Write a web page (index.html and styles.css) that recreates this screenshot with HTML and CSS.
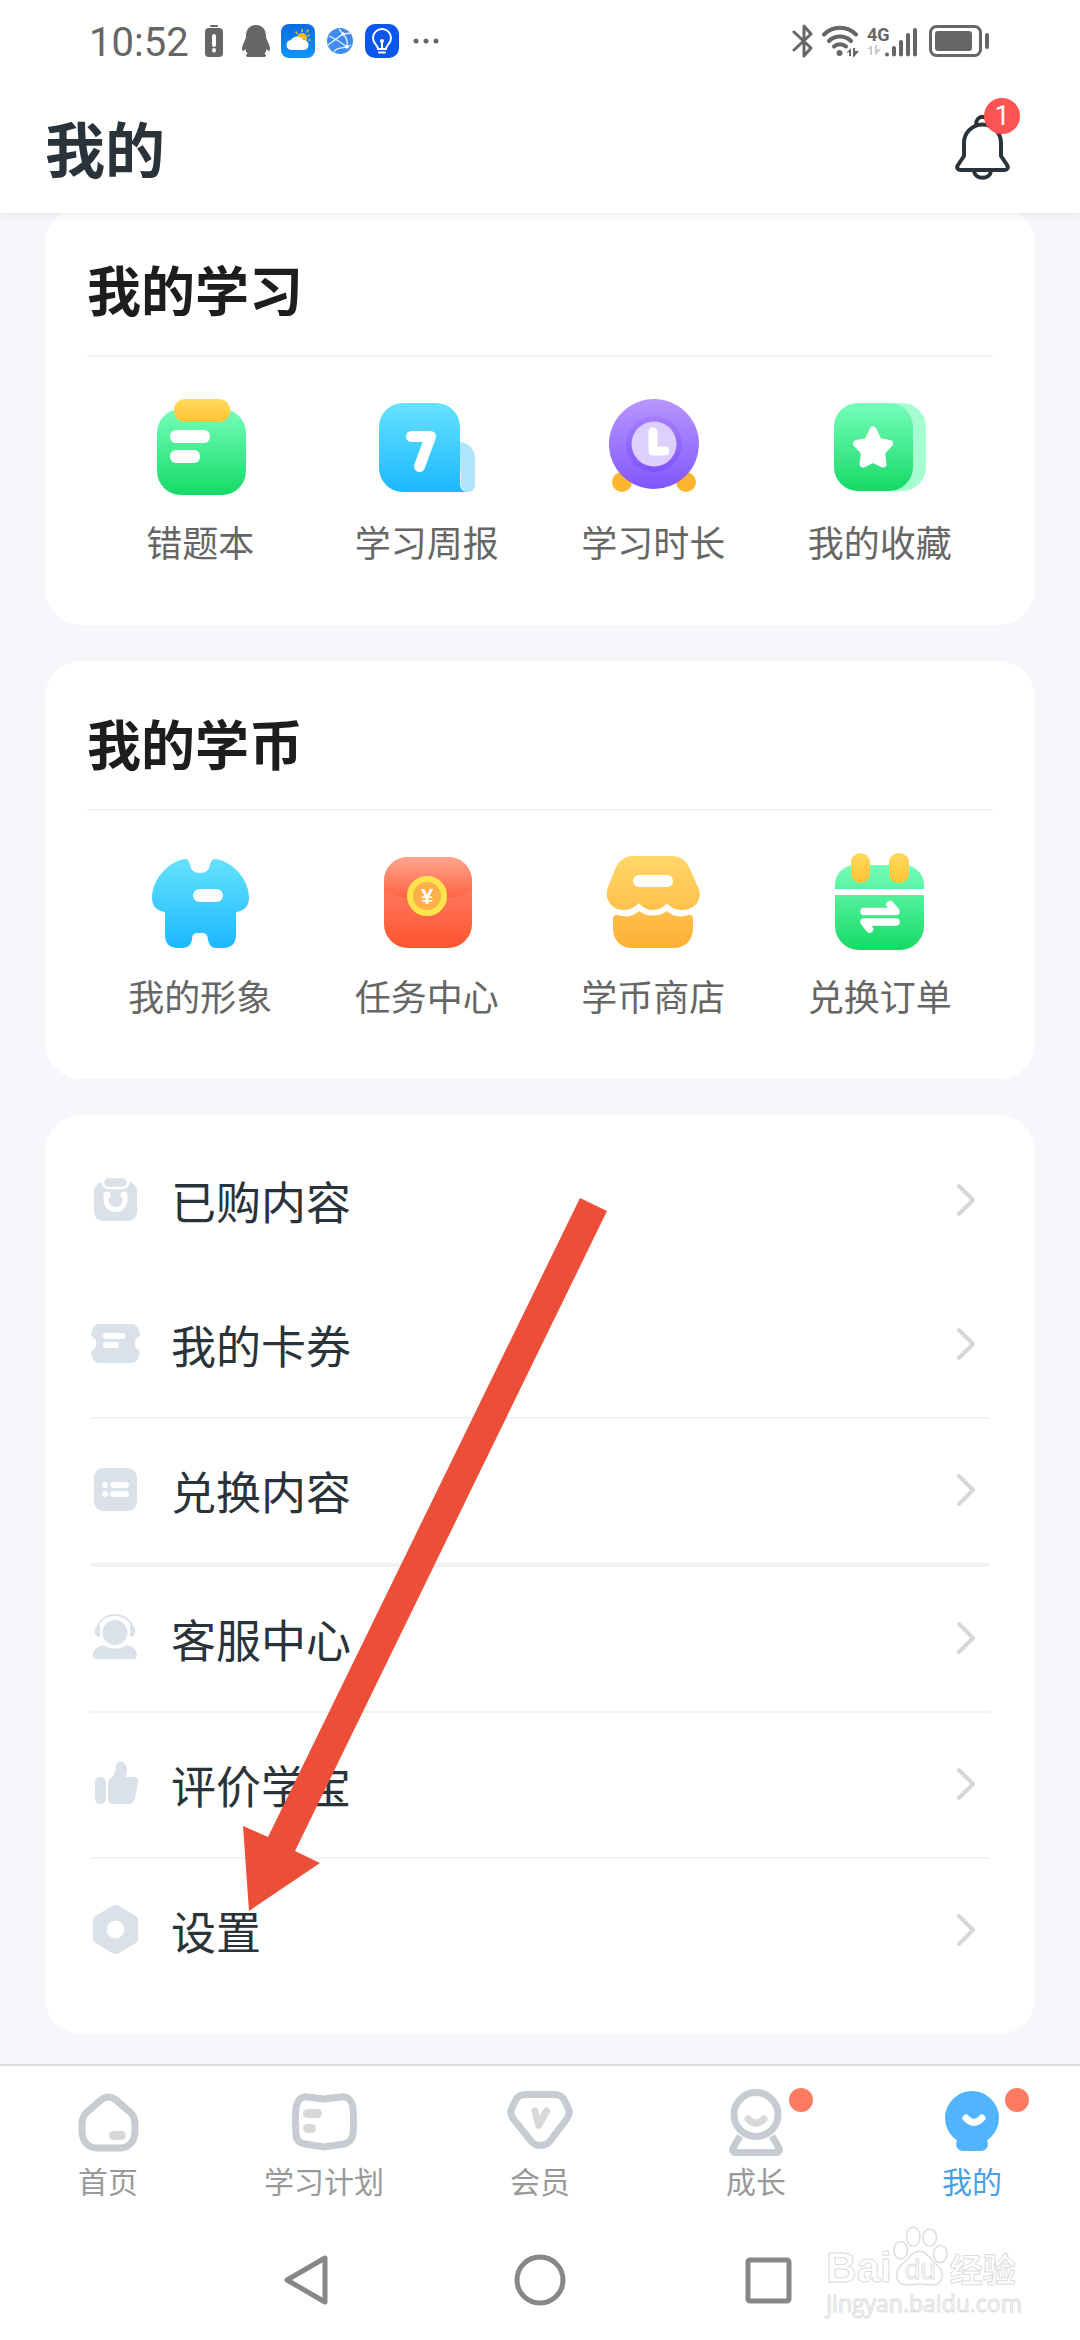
FILE: index.html
```html
<!DOCTYPE html>
<html lang="zh-CN">
<head>
<meta charset="utf-8">
<meta name="viewport" content="width=device-width">
<title>我的</title>
<link rel="stylesheet" href="styles.css">
</head>
<body>
<svg class="defs" width="0" height="0" aria-hidden="true">
  <defs>
    <linearGradient id="green" x1="0" y1="0" x2="0" y2="1"><stop offset="0" stop-color="#76fdbb"/><stop offset="1" stop-color="#14da65"/></linearGradient>
    <linearGradient id="yellow" x1="0" y1="0" x2="0" y2="1"><stop offset="0" stop-color="#ffd95c"/><stop offset="1" stop-color="#ffc435"/></linearGradient>
    <linearGradient id="blue" x1="0" y1="0" x2="0" y2="1"><stop offset="0" stop-color="#65e2ff"/><stop offset="1" stop-color="#1bb8ff"/></linearGradient>
    <linearGradient id="purple" x1="0" y1="0" x2="0" y2="1"><stop offset="0" stop-color="#b896ff"/><stop offset="1" stop-color="#8157fc"/></linearGradient>
    <linearGradient id="ring" x1="0" y1="0" x2="0" y2="1"><stop offset="0" stop-color="#a67efa"/><stop offset="1" stop-color="#8253fc"/></linearGradient>
    <linearGradient id="red" x1="0" y1="0" x2="0" y2="1"><stop offset="0" stop-color="#ff8a72"/><stop offset="1" stop-color="#ff5531"/></linearGradient>
    <linearGradient id="flap" x1="0" y1="0" x2="0" y2="1"><stop offset="0" stop-color="#ffa690"/><stop offset="1" stop-color="#ff5f3e"/></linearGradient>
    <linearGradient id="orange" gradientUnits="userSpaceOnUse" x1="0" y1="17" x2="0" y2="109"><stop offset="0" stop-color="#ffd769"/><stop offset="1" stop-color="#ffb036"/></linearGradient>
    <linearGradient id="sky" x1="0" y1="0" x2="0" y2="1"><stop offset="0" stop-color="#0b6be0"/><stop offset="1" stop-color="#0f95fa"/></linearGradient>
  </defs>
</svg>

<div class="status">
  <span class="status-time">10:52</span>
  <svg class="s-alert" width="18" height="34" viewBox="0 0 18 34"><rect x="5" y="1" width="8" height="2" rx="1" fill="#666"/><rect y="4" width="18" height="29" rx="4" fill="#666"/><path d="M9 12v9M9 26v.5" stroke="#fff" stroke-width="4" stroke-linecap="round"/></svg>
  <svg class="s-qq" width="28" height="34" viewBox="0 0 28 34"><path d="M14 1c6 0 10 4 10 11 0 4 4 8 4 13 0 3-2 2-3.500 0 0 2-1 3.500-2 4.500 2 1 2 3.500-1 3.500h-15c-3 0-3-2.500-1-3.500-1-1-2-2.500-2-4.500-1.500 2-3.500 3-3.500 0 0-5 4-9 4-13C4 5 8 1 14 1z" fill="#666"/></svg>
  <svg class="s-weather" width="34" height="34" viewBox="0 0 34 34"><rect width="34" height="34" rx="8" fill="url(#sky)"/><g stroke="#fcb928" stroke-width="1.500" stroke-linecap="round"><path d="M21 5.500v2M26 8l1-2M15 8l1 1.500M27 12l1-1M28 16h1"/></g><circle cx="21" cy="14" r="5" fill="#fcb928"/><path d="M11 26a5 5 0 0 1-1-10 7 7 0 0 1 12 0 5 5 0 1 1 1 10z" fill="#fff"/></svg>
  <svg class="s-globe" width="26" height="26" viewBox="0 0 26 26"><circle cx="13" cy="13" r="13" fill="#3f8bf0"/><path d="M1 17 16 6l9-1M16 6c4 4 5 8 4 13l4-2M2 8c7 3 12 6 18 11M16 6 12 1M7 24c2-4 6-4 13-5" fill="none" stroke="#e6f1ff" stroke-width="1.300"/><circle cx="16" cy="6" r="1.800" fill="#fff"/><circle cx="20" cy="19" r="1.800" fill="#fff"/></svg>
  <svg class="s-bulb" width="34" height="34" viewBox="0 0 34 34"><rect width="34" height="34" rx="10" fill="#0b57ee"/><path d="M13 25c0-4-5-5-5-11a9 9 0 0 1 18 0c0 6-5 7-5 11zM14 28.500h6M17 24v-7" fill="none" stroke="#fff" stroke-width="2" stroke-linecap="round"/><circle cx="17" cy="17" r="2" fill="#fff"/></svg>
  <svg class="s-dots" width="26" height="6" viewBox="0 0 26 6" fill="#666"><circle cx="3" cy="3" r="2.500"/><circle cx="13" cy="3" r="2.500"/><circle cx="23" cy="3" r="2.500"/></svg>
  <span class="spacer"></span>
  <svg width="22" height="34" viewBox="0 0 22 34" fill="none" stroke="#666" stroke-width="3" stroke-linejoin="round" stroke-linecap="round"><path d="M2 8l17 16-7 8V2l7 8L2 26"/></svg>
  <svg class="s-wifi" width="40" height="34" viewBox="0 0 40 34" fill="none" stroke="#666" stroke-width="4" stroke-linecap="round"><path d="M3 10.500c9-9 23-9 32 0M8 17c6-6 16-6 22 0M13 22.500c3-3 9-3 12 0"/><circle cx="18.500" cy="29" r="3" fill="#666" stroke="none"/><path d="M25 29l5-5v8h-2v-4zM32 24h2v3h4l-5 6h-1z" fill="#666" stroke="none"/></svg>
  <div class="s-net"><span>4G</span><svg width="14" height="12" viewBox="0 0 14 12" fill="#ccc"><path d="M0 5l5-4v10H3V5zM8 1h2v4h4l-5 6H8z"/></svg></div>
  <svg width="32" height="34" viewBox="0 0 32 34" stroke="#666" stroke-width="4" stroke-linecap="round"><path d="M2 30.500v0M9 24v6.500M16 18v12.500M23 11v19.500M30 6v24.500"/></svg>
  <svg class="s-batt" width="60" height="34" viewBox="0 0 60 34"><rect x="1.500" y="2.500" width="50" height="29" rx="6" fill="none" stroke="#666" stroke-width="3"/><rect x="6" y="7" width="37" height="20" rx="3" fill="#666"/><rect x="56" y="9" width="4" height="16" rx="2" fill="#666"/></svg>
</div>

<header class="header">
  <h1>我的</h1>
  <button class="bell" type="button" aria-label="消息">
    <svg width="60" height="72" viewBox="0 0 60 72" fill="none" stroke="#2a333a" stroke-width="4" stroke-linejoin="round"><path d="M12 45V32a18.500 18.500 0 0 1 37 0v13l6 9c2 3 0 5-3 5H9c-3 0-5-2-3-5zM24 14c0-11 13-11 13 0M22 60c1 9 16 9 17 0"/></svg>
    <span class="badge">1</span>
  </button>
</header>

<main class="main">
  <section class="card">
    <h2>我的学习</h2>
    <div class="grid">
      <a href="#"><svg viewBox="0 0 120 120"><rect x="17" y="24" width="89" height="86" rx="24" fill="url(#green)"/><rect x="34" y="14" width="56" height="23" rx="11" fill="url(#yellow)"/><rect x="30" y="45" width="40" height="13" rx="6" fill="#fff"/><rect x="30" y="65" width="30" height="13" rx="6" fill="#fff"/></svg>错题本</a>
      <a href="#"><svg viewBox="0 0 120 120"><path d="M92 57c10 0 16 7 16 17v26a7 7 0 0 1-14 0z" fill="#b0e4fd"/><path d="M36 18h33a24 24 0 0 1 24 24v56c0 6 3 9 8 9H36a24 24 0 0 1-24-24V42a24 24 0 0 1 24-24z" fill="url(#blue)"/><path d="M44.500 51.500h19l-11 30" fill="none" stroke="#fff" stroke-width="11" stroke-linecap="round" stroke-linejoin="round"/></svg>学习周报</a>
      <a href="#"><svg viewBox="0 0 120 120"><circle cx="29" cy="97" r="10" fill="#ffb62f"/><circle cx="93" cy="97" r="10" fill="#ffb62f"/><circle cx="61" cy="59" r="45" fill="url(#purple)"/><circle cx="61" cy="59" r="28" fill="url(#ring)"/><circle cx="61" cy="59" r="22.500" fill="#ddd0ff"/><path d="M60 47v19h12" fill="none" stroke="#fff" stroke-width="9" stroke-linecap="round" stroke-linejoin="round"/></svg>学习时长</a>
      <a href="#"><svg viewBox="0 0 120 120"><rect x="26" y="18" width="80" height="88" rx="24" fill="#a6fdcf"/><rect x="14" y="18" width="79" height="88" rx="24" fill="url(#green)"/><path d="M53 45l5.500 11.500 11 2-8 9 1.500 11.500-10-5-10 5 1.500-11.500-8-9 11-2z" fill="#fff" stroke="#fff" stroke-width="7" stroke-linejoin="round"/></svg>我的收藏</a>
    </div>
  </section>

  <section class="card">
    <h2>我的学币</h2>
    <div class="grid">
      <a href="#"><svg viewBox="0 0 120 120"><path d="M45 20c-16 2-33 20-33 39 0 8 5 13 13 14v24c0 7 5 12 12 12h5c7 0 9-4 10-8 0-5 2-7 5-7h6c3 0 5 3 5 7 1 5 4 8 8 8h8c7 0 12-5 12-12V73c8-1 13-6 13-14 0-19-16-36-33-39-4 0-5 2-6 6-1 5-4 8-10 8s-9-3-10-8c-1-4-2-6-5-6z" fill="url(#blue)"/><rect x="53" y="50" width="30" height="13" rx="6.500" fill="#fff"/></svg>我的形象</a>
      <a href="#"><svg viewBox="0 0 120 120"><rect x="17" y="18" width="88" height="91" rx="24" fill="url(#red)"/><path d="M41 18h40a24 24 0 0 1 24 24v10c-28 12-60 12-88 0V42a24 24 0 0 1 24-24z" fill="url(#flap)"/><circle cx="60" cy="57" r="17" fill="#fdb04a" stroke="#ffe44e" stroke-width="6"/><text x="60" y="65" text-anchor="middle" class="yen">¥</text></svg>任务中心</a>
      <a href="#"><svg viewBox="0 0 120 120"><path d="M39 17h40c8 0 14 4 17 11l9 20c5 10-1 23-16 23-7 0-12-3-15-7-3 4-8 7-14 7s-11-3-14-7c-4 4-9 7-15 7-14 0-20-13-16-23l8-20c4-7 9-11 16-11zM20 80c0-3 2-5 5-4 9 3 16 1 21-4 8 6 20 6 28 0 5 5 13 7 21 4 3-1 5 1 5 4v10c0 11-8 19-19 19H39c-11 0-19-8-19-19z" fill="url(#orange)"/><rect x="40" y="36" width="40" height="12" rx="6" fill="#fff"/></svg>学币商店</a>
      <a href="#"><svg viewBox="0 0 120 120"><path d="M35 26h49a20 20 0 0 1 20 20v41a24 24 0 0 1-24 24H39a24 24 0 0 1-24-24V46a20 20 0 0 1 20-20z" fill="url(#green)"/><path d="M15 50h89v6H15z" fill="#fff"/><rect x="31" y="14" width="19" height="30" rx="9.500" fill="url(#yellow)"/><rect x="69" y="14" width="20" height="30" rx="9.500" fill="url(#yellow)"/><path d="M44 72.500h32l-6-7M76 83H44l5.500 7" fill="none" stroke="#fff" stroke-width="7.500" stroke-linecap="round" stroke-linejoin="round"/></svg>兑换订单</a>
    </div>
  </section>

  <nav class="card list">
    <a href="#"><svg class="icon" viewBox="0 0 50 50"><rect x="4" y="6" width="43" height="39" rx="9"/><rect x="13" y="1" width="25" height="11" rx="5.500" stroke="#fff" stroke-width="2.500"/><path d="M16 19v5a9.500 9.500 0 0 0 19 0v-5" fill="none" stroke="#fff" stroke-width="5"/><circle cx="17" cy="19" r="3.500" fill="#fff"/><circle cx="34" cy="19" r="3.500" fill="#fff"/></svg><span>已购内容</span><svg class="chev" viewBox="0 0 24 40"><path d="M5 5l14 14L5 33"/></svg></a>
    <a href="#"><svg class="icon" viewBox="0 0 50 50"><path d="M10 4h31c5 0 8 3 9 12a8 8 0 0 0 0 15c-1 9-4 12-9 12H10c-5 0-8-3-9-12a8 8 0 0 0 0-15C2 7 5 4 10 4z"/><rect x="13" y="13" width="22" height="6" rx="3" fill="#fff"/><rect x="13" y="22" width="16" height="6" rx="3" fill="#fff"/></svg><span>我的卡券</span><svg class="chev" viewBox="0 0 24 40"><path d="M5 5l14 14L5 33"/></svg></a>
    <a href="#" class="line"><svg class="icon" viewBox="0 0 50 50"><rect x="4" y="2" width="43" height="43" rx="9"/><g fill="#fff"><circle cx="15" cy="19" r="3"/><circle cx="15" cy="28" r="3"/><rect x="20" y="16" width="19" height="6" rx="3"/><rect x="20" y="25" width="19" height="6" rx="3"/></g></svg><span>兑换内容</span><svg class="chev" viewBox="0 0 24 40"><path d="M5 5l14 14L5 33"/></svg></a>
    <a href="#" class="line thick"><svg class="icon" viewBox="0 0 50 50"><circle cx="25" cy="18.500" r="12.500"/><path d="M7 16C9-4 41-4 43 16" fill="none" stroke="#dbe1e8" stroke-width="1.800"/><path d="M10 11v12c-7 0-7-12 0-12zM40 11v12c7 0 7-12 0-12zM13 31c8 5 16 5 24 0 5 1 9 4 10 9 0 3-1 5-4 5H7c-3 0-4-2-4-5 1-5 5-8 10-9z"/></svg><span>客服中心</span><svg class="chev" viewBox="0 0 24 40"><path d="M5 5l14 14L5 33"/></svg></a>
    <a href="#" class="line"><svg class="icon" viewBox="0 0 50 50"><rect x="5" y="17" width="11" height="27" rx="5.500"/><path d="M18 24c0-4 2-5 4-7 3-3 3-6 4-11 1-7 11-6 11 4 0 3-1 5-1 7h8c3 0 5 2 4 6l-3 15c-1 4-3 6-6 6H24c-4 0-6-2-6-6z"/></svg><span>评价学宝</span><svg class="chev" viewBox="0 0 24 40"><path d="M5 5l14 14L5 33"/></svg></a>
    <a href="#" class="line"><svg class="icon" viewBox="0 0 50 50"><path d="M22 0c2-1 5-1 7 0l15 9c3 1 4 3 4 5v19c0 2-1 4-4 5l-15 9c-2 1-5 1-7 0L7 38c-3-1-4-3-4-5V14c0-2 1-4 4-5z"/><circle cx="25.500" cy="23.500" r="9" fill="#fff"/></svg><span>设置</span><svg class="chev" viewBox="0 0 24 40"><path d="M5 5l14 14L5 33"/></svg></a>
    <svg class="pointer" width="364" height="713" viewBox="0 0 364 713" aria-hidden="true"><path d="M337 0l27 13L52 653l25 12L6 713 0 628l25 11z" fill="#ec4e38"/></svg>
  </nav>
</main>

<nav class="tabs">
  <a href="#"><svg viewBox="0 0 80 80"><path class="o" d="M14 49v-7c0-6 2-9 5-12l14-12c5-4 10-4 15 0l14 12c3 3 5 6 5 12v7c0 10-6 17-15 17H29c-9 0-15-7-15-17z"/><rect x="41" y="49" width="17" height="9" rx="4.500"/></svg>首页</a>
  <a href="#"><svg viewBox="0 0 80 80"><path class="o" d="M24 15l16 2 17-2c7-1 11 4 12 11 1 10 1 17 0 26-1 6-4 9-9 10l-20 3-19-3c-6-1-9-4-9-10-1-9-1-17 0-26 1-7 5-12 12-11z"/><rect x="19" y="27" width="19" height="9" rx="4.500"/><rect x="19" y="42" width="13" height="9" rx="4.500"/></svg>学习计划</a>
  <a href="#"><svg viewBox="0 0 80 80"><path class="o" d="M25 12.500h30c4 0 7 2 9 5l4 8c2 4 1 8-1 11L50 59c-5 6-14 6-19 0L13 36.500c-2-3-3-7-1-11l4-8c2-3 5-5 9-5z"/><path class="i" d="M35 29l3.500 14.500L46.500 29"/></svg>会员</a>
  <a href="#"><svg viewBox="0 0 80 80"><circle class="o" cx="40" cy="32.500" r="22"/><path class="o" d="M24 54l-7 12c-1 2 0 4 2 4.500h42c2-.5 3-2.500 2-4.500l-7-12"/><path class="i" d="M32 37q8 8 16 0"/></svg>成长<i class="dot"></i></a>
  <a href="#" class="active"><svg viewBox="0 0 80 80"><circle cx="40" cy="36" r="27" fill="#52b4ff"/><rect x="24" y="55" width="32" height="14" rx="7" fill="#52b4ff"/><path d="M34 36q8 9 16 0" fill="none" stroke="#fff" stroke-width="7" stroke-linecap="round"/></svg>我的<i class="dot"></i></a>
</nav>

<div class="sysnav">
  <button type="button" aria-label="返回"><svg viewBox="0 0 56 56"><path d="M6 28 44 6v44z"/></svg></button>
  <button type="button" aria-label="主页"><svg viewBox="0 0 56 56"><circle cx="28" cy="28" r="23"/></svg></button>
  <button type="button" aria-label="最近任务"><svg viewBox="0 0 56 56"><rect x="5" y="8" width="41" height="41" rx="2"/></svg></button>
  <div class="mark">
    <div class="mark-top"><b>Bai</b><span class="paw"><svg width="58" height="64" viewBox="0 0 60 66" fill="#fff" stroke="#ddd" stroke-width="1.500"><ellipse cx="9" cy="27" rx="7" ry="9"/><ellipse cx="22" cy="13" rx="7" ry="10"/><ellipse cx="39" cy="14" rx="7" ry="9"/><ellipse cx="50" cy="31" rx="7" ry="9"/><path d="M29 28c8 0 10 9 16 13 11 8 8 22-4 22-5 0-8-1-13-1s-7 1-12 1C3 63 1 50 11 41c7-5 9-13 18-13z"/></svg><em>du</em></span><strong>经验</strong></div>
    <div class="mark-url">jingyan.baidu.com</div>
  </div>
</div>
</body>
</html>
```
FILE: styles.css
```css
* { box-sizing: border-box; }

body {
  margin: 0;
  min-height: 100vh;
  display: flex;
  flex-direction: column;
  background: #f6f7fa;
  color: #2a333a;
  font-family: "Noto Sans CJK SC", sans-serif;
}

a { color: inherit; text-decoration: none; }
button { padding: 0; border: 0; background: none; }
svg { display: block; flex: none; }
.defs { position: absolute; }
.spacer { flex: 1; }

.status {
  position: relative;
  z-index: 2;
  display: flex;
  align-items: center;
  height: 82px;
  padding: 0 91px 0 89px;
  background: #fff;
  color: #666;
}
.status-time {
  width: 116px;
  padding-top: 4px;
  font: 40px/48px Roboto, sans-serif;
}
.s-qq { margin-left: 19px; }
.s-weather { margin-left: 11px; }
.s-globe { margin-left: 12px; }
.s-bulb { margin-left: 12px; }
.s-dots { margin-left: 14px; }
.s-wifi { margin-left: 7px; }
.s-net {
  width: 18px;
  margin-left: 6px;
  font: bold 18px/18px "Liberation Sans Narrow", Roboto, sans-serif;
}
.s-batt { margin-left: 12px; }

.header {
  position: relative;
  z-index: 1;
  display: flex;
  align-items: center;
  justify-content: space-between;
  height: 131px;
  padding: 0 68px 2px 45px;
  background: #fff;
  box-shadow: 0 0 12px rgba(0, 0, 0, 0.1);
}
h1 { margin: 0; font-size: 60px; line-height: 72px; }
.bell { position: relative; }
.badge {
  position: absolute;
  top: -13px;
  right: -8px;
  width: 36px;
  height: 36px;
  border-radius: 18px;
  background: #fe5353;
  color: #fff;
  font: 27px/36px Roboto, sans-serif;
  text-align: center;
}

.main {
  flex: 1;
  display: flex;
  flex-direction: column;
  gap: 36px;
  margin-top: -6px;
  padding: 0 45px 30px;
}
.card {
  padding: 0 42px;
  border-radius: 36px;
  background: #fff;
}
h2 {
  margin: 0;
  padding: 50px 0 34px;
  border-bottom: 2px solid #f2f2f3;
  color: #1d1d1d;
  font-size: 54px;
  line-height: 64px;
}
.grid {
  display: grid;
  grid-template-columns: repeat(4, 1fr);
  padding: 28px 0 60px;
}
.grid a {
  display: flex;
  flex-direction: column;
  align-items: center;
  gap: 12px;
  color: #666;
  font-size: 36px;
  line-height: 48px;
}
.grid svg { width: 120px; height: 120px; }
.yen { font: bold 22px "Liberation Sans", sans-serif; fill: #fff; }

.list { position: relative; padding: 14px 45px 31px; }
.list a {
  display: flex;
  align-items: center;
  gap: 31px;
  padding-right: 12px;
  font-size: 45px;
  line-height: 144px;
}
.list span { flex: 1; }
.line { border-top: 2px solid #f2f2f3; }
.thick { border-top-width: 4px; }
.icon { width: 50px; height: 50px; fill: #dbe1e8; overflow: visible; }
.chev {
  width: 24px;
  height: 40px;
  fill: none;
  stroke: #d5d7d9;
  stroke-width: 4;
  stroke-linecap: round;
  stroke-linejoin: round;
}
.pointer { position: absolute; top: 83px; left: 198px; }

.tabs {
  display: grid;
  grid-template-columns: repeat(5, 1fr);
  padding-top: 16px;
  border-top: 2px solid #dcdee2;
  background: #fff;
}
.tabs a {
  position: relative;
  display: flex;
  flex-direction: column;
  align-items: center;
  color: #999;
  font-size: 30px;
  line-height: 36px;
}
.tabs .active { color: #4a9ee8; }
.tabs svg { width: 80px; height: 80px; fill: #d8d8d8; }
.tabs .o { fill: none; stroke: #c7ccd2; stroke-width: 7; }
.tabs .i {
  fill: none;
  stroke: #d8d8d8;
  stroke-width: 7;
  stroke-linecap: round;
  stroke-linejoin: round;
}
.dot {
  position: absolute;
  top: 6px;
  left: 50%;
  width: 24px;
  height: 24px;
  margin-left: 33px;
  border-radius: 50%;
  background: #ff7a63;
}

.sysnav {
  position: relative;
  display: flex;
  justify-content: center;
  gap: 175px;
  padding: 54px 0 32px;
  background: #fff;
}
.sysnav button svg {
  width: 56px;
  height: 56px;
  fill: none;
  stroke: #878787;
  stroke-width: 5;
  stroke-linejoin: round;
}

.mark {
  position: absolute;
  right: 58px;
  bottom: 22px;
  color: #fff;
  -webkit-text-stroke: 1px #ddd;
}
.mark-top { display: flex; align-items: flex-end; line-height: 40px; }
.mark-top b { font: bold 42px/40px "Liberation Sans", sans-serif; }
.mark-top strong { font-size: 33px; }
.paw { position: relative; }
.paw em {
  position: absolute;
  bottom: 0;
  left: 13px;
  font: 28px/36px "Liberation Sans", sans-serif;
}
.mark-url { font: 23px/30px "Open Sans", sans-serif; }
```
